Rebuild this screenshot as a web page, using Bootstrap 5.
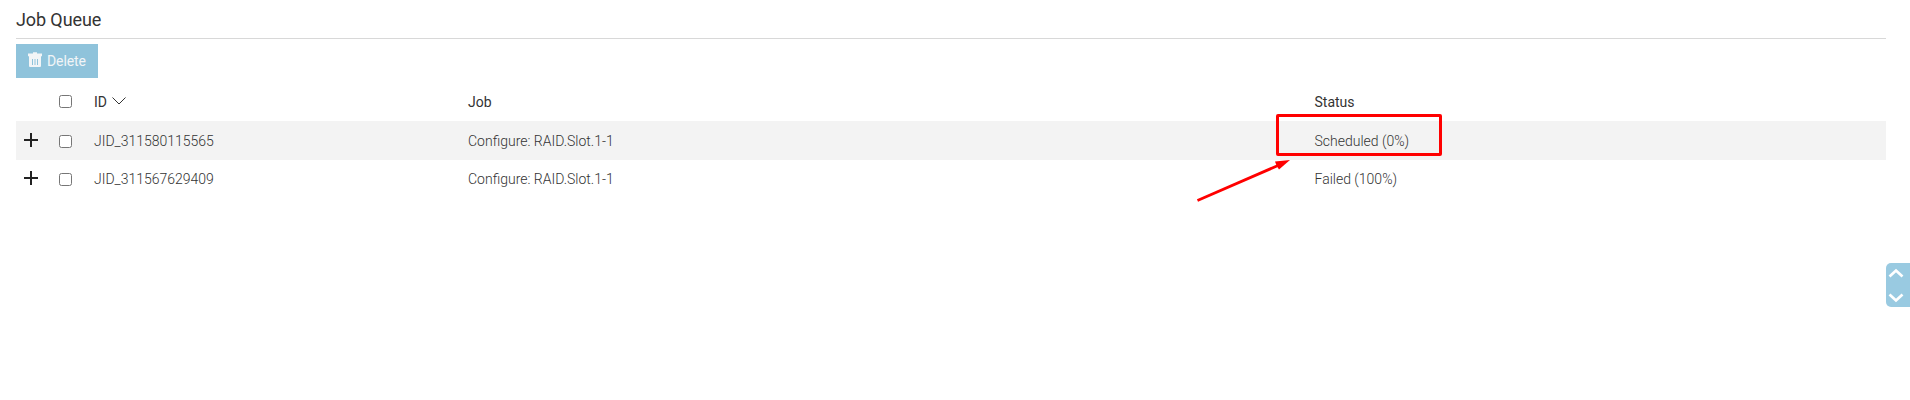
<!DOCTYPE html>
<html lang="en">
<head>
<meta charset="utf-8">
<title>Job Queue</title>
<link href="https://cdn.jsdelivr.net/npm/bootstrap@5.3.0/dist/css/bootstrap.min.css" rel="stylesheet">
<style>
body{font-family:Roboto,sans-serif;font-size:14px;font-weight:300;line-height:20px;color:#333;background:#fff;height:400px;overflow:hidden}
.queue{width:1870px;margin-left:16px}
.queue-title{height:39px;padding-top:8px;border-bottom:1px solid #d8d8d8;font-size:18px;font-weight:400;line-height:24px;color:#333;letter-spacing:-.1px}
.btn-delete,.btn-delete:disabled{width:82px;height:34px;margin-top:5px;background:#8fc3db;color:#f2f5f7;opacity:1;font-size:14px;font-weight:400;letter-spacing:-.1px;line-height:20px;border:0}
.btn-delete svg{margin:-3px 5px 0 12px}
.queue-table{table-layout:fixed;margin-top:6px;--bs-table-bg:transparent;--bs-table-color:#333}
.queue-table>*>tr>*{padding:0;border:0;vertical-align:middle;height:38px;font-weight:300}
.queue-table>thead>tr>th{height:37px;font-weight:400;padding-bottom:1px}
.queue-table>tbody>tr:first-child>td{height:39px;padding-top:1px;background:#f3f3f3}
.queue-table .form-check-input{width:13px;height:13px;margin:1px 0 0;border:1px solid #767676;border-radius:2.5px;display:block}
.queue-table th .form-check-input{margin-top:-1px}
.queue-table svg,.pager svg{display:block}
.expand-icon{margin:-2px 0 0 8px}
.queue-table>*>tr>:last-child{padding-left:.5px}
.mark-frame{left:-38.5px;top:-17px;width:166px;height:42px;border:3px solid #f00;border-radius:2px}
.mark-arrow{left:-118.5px;top:28px}
.pager{left:1886px;top:263px;width:24px;height:44px;background:#99cae1;border-radius:5px 0 0 5px}
</style>
</head>
<body>
<main class="queue">
<h1 class="queue-title mb-0">Job Queue</h1>
<button class="btn btn-delete rounded-0 p-0 d-flex align-items-center" disabled>
<svg width="14" height="15" viewBox="0 0 14 15"><path fill="#f2f5f7" fill-rule="evenodd" d="M0 1.5h5V.3h4v1.2h5v2.8H0zM1 4.3h12V14q0 1-1 1H2q-1 0-1-1zm3 2.7v6h1V7zm2.5 0v6h1V7zM9 7v6h1V7z"/></svg>Delete</button>
<table class="table queue-table mb-0">
<colgroup><col style="width:43px"><col style="width:35px"><col style="width:374px"><col style="width:846px"><col></colgroup>
<thead><tr><th></th><th><input class="form-check-input" type="checkbox" aria-label="Select all"></th>
<th><div class="d-flex align-items-center">ID<svg class="ms-1" width="16" height="10" viewBox="0 0 16 10" fill="none" stroke="#333"><path d="M1.5 .5 8 7 14.5 .5"/></svg></div></th><th>Job</th><th>Status</th></tr></thead>
<tbody>
<tr><td><svg class="expand-icon" width="14" height="14" stroke="#222" stroke-width="2"><path d="M0 7h14M7 0v14"/></svg></td><td><input class="form-check-input" type="checkbox" aria-label="Select job"></td><td>JID_311580115565</td><td>Configure: RAID.Slot.1-1</td>
<td><div class="position-relative">Scheduled (0%)<span class="mark-frame position-absolute"></span>
<svg class="mark-arrow position-absolute" width="98" height="46"><path d="M1.5 41.5 82 6.5" stroke="#f00" stroke-width="2.8" fill="none"/><path fill="#f00" d="M94 1 79 2.6 80.5 6.5 83 10.5z"/></svg></div></td></tr>
<tr><td><svg class="expand-icon" width="14" height="14" stroke="#222" stroke-width="2"><path d="M0 7h14M7 0v14"/></svg></td><td><input class="form-check-input" type="checkbox" aria-label="Select job"></td><td>JID_311567629409</td><td>Configure: RAID.Slot.1-1</td><td>Failed (100%)</td></tr>
</tbody>
</table>
</main>
<div class="pager position-fixed"><svg width="24" height="44" fill="none" stroke="#fff" stroke-width="2.7"><path d="m3.5 13.5 6.5-6 6.5 6M3.5 31.5l6.5 6 6.5-6"/></svg></div>
<script src="https://cdn.jsdelivr.net/npm/bootstrap@5.3.0/dist/js/bootstrap.bundle.min.js"></script>
</body>
</html>
